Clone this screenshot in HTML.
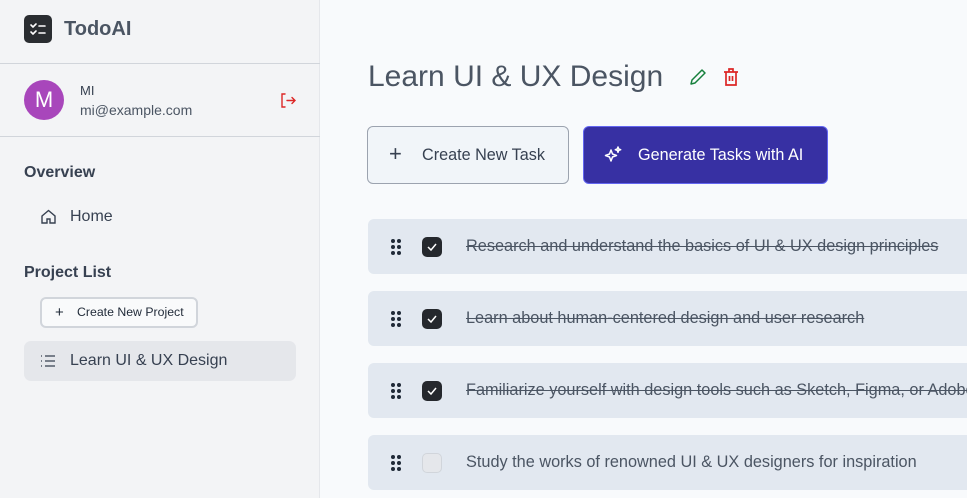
<!DOCTYPE html>
<html><head><style>
*{box-sizing:border-box;margin:0;padding:0}
body{width:967px;height:498px;overflow:hidden;font-family:"Liberation Sans",sans-serif;background:#f8fafc;position:relative;color:#374151}
.sb{position:absolute;left:0;top:0;width:320px;height:498px;background:#f3f4f6;border-right:1px solid #e5e7eb}
.abs{position:absolute}
.hr{position:absolute;left:0;width:320px;height:1px;background:#d1d5db}
.row{position:absolute;left:368px;width:620px;height:55px;background:#e2e8f0;border-radius:6px;overflow:hidden}
.row .t{position:absolute;left:98px;top:18px;font-size:16.3px;color:#4b5563;white-space:nowrap}
.row .t.s{text-decoration:line-through}
.cb{position:absolute;left:54px;top:18px;width:20px;height:20px;border-radius:5px;background:#25282d}
.cb.e{background:#e5e7eb;border:1px solid #d1d5db}
.dots{position:absolute;left:22px;top:19px}
</style></head><body>
<div class="sb">
 <div class="abs" style="left:24px;top:15px;width:28px;height:28px;border-radius:5px;background:#2a2d31"></div>
 <svg class="abs" style="left:24px;top:15px" width="28" height="28" viewBox="0 0 28 28" fill="none" stroke="#fff" stroke-width="1.6" stroke-linecap="round"><path d="M7 10l2 2 3-3M7 17l2 2 3-3M15 11h6M15 18h6"/></svg>
 <div class="abs" style="left:64px;top:18px;font-size:20px;font-weight:bold;color:#4b5563">TodoAI</div>
 <div class="hr" style="top:63px"></div>
 <div class="abs" style="left:24px;top:80px;width:40px;height:40px;border-radius:50%;background:#a846bb;color:#fff;font-size:22px;text-align:center;line-height:40px">M</div>
 <div class="abs" style="left:80px;top:83px;font-size:13px;color:#374151">MI</div>
 <div class="abs" style="left:80px;top:102px;font-size:14px;color:#4b5563">mi@example.com</div>
 <svg class="abs" style="left:279px;top:92px" width="17" height="17" viewBox="0 0 17 17" fill="none" stroke="#dc2626" stroke-width="1.4" stroke-linecap="round"><path d="M6 2H3v13h3M8 8.5h8M13 5.5l3 3-3 3"/></svg>
 <div class="hr" style="top:136px"></div>
 <div class="abs" style="left:24px;top:164px;font-size:16px;font-weight:bold;color:#374151">Overview</div>
 <svg class="abs" style="left:40px;top:208px" width="17" height="17" viewBox="0 0 17 17" fill="none" stroke="#374151" stroke-width="1.4"><path d="M2 8l6.5-5.5L15 8v7H10v-4H7v4H2z"/></svg>
 <div class="abs" style="left:70px;top:208px;font-size:16px;color:#374151">Home</div>
 <div class="abs" style="left:24px;top:264px;font-size:16px;font-weight:bold;color:#374151">Project List</div>
 <div class="abs" style="left:40px;top:297px;width:158px;height:31px;border:2px solid #d1d5db;border-radius:6px;background:#f9fafb;font-size:12.3px;color:#1f2937;line-height:27px;padding-left:35px">Create New Project</div>
 <div class="abs" style="left:55px;top:304px;font-size:15px;color:#1f2937">+</div>
 <div class="abs" style="left:24px;top:341px;width:272px;height:40px;border-radius:7px;background:#e5e7eb"></div>
 <svg class="abs" style="left:40px;top:354px" width="16" height="14" viewBox="0 0 16 14" fill="none" stroke="#374151" stroke-width="1.3"><path d="M5 2h10M5 7h10M5 12h10M1 2h1M1 7h1M1 12h1"/></svg>
 <div class="abs" style="left:70px;top:352px;font-size:16px;color:#374151">Learn UI &amp; UX Design</div>
</div>
<div class="abs" style="left:368px;top:60px;font-size:30px;color:#4b5563">Learn UI &amp; UX Design</div>
<svg class="abs" style="left:688px;top:67px" width="20" height="20" viewBox="0 0 20 20" fill="none" stroke="#16803c" stroke-width="1.5" stroke-linejoin="round"><path d="M3 17l1-4L14 3l3 3L7 16z"/></svg>
<svg class="abs" style="left:721px;top:67px" width="20" height="20" viewBox="0 0 20 20" fill="none" stroke="#dc2626" stroke-width="1.7"><path d="M3 5h14M8 5V2h4v3M5 5v13h10V5M8.5 9v5M11.5 9v5"/></svg>
<div class="abs" style="left:367px;top:126px;width:202px;height:58px;border:1px solid #9ca3af;border-radius:6px;background:#f1f5f9;font-size:16.2px;color:#374151;line-height:57px;padding-left:54px">Create New Task</div>
<div class="abs" style="left:389px;top:141px;font-size:22px;color:#374151;font-weight:300">+</div>
<div class="abs" style="left:583px;top:126px;width:245px;height:58px;border:1px solid #6366f1;border-radius:6px;background:#3730a3;font-size:16.2px;color:#fff;line-height:57px;padding-left:54px">Generate Tasks with AI</div>
<svg class="abs" style="left:603px;top:145px" width="20" height="20" viewBox="0 0 20 20" fill="none" stroke="#fff" stroke-width="1.5" stroke-linejoin="round"><path d="M8 5l1.5 4 4 1.5-4 1.5L8 16l-1.5-4-4-1.5 4-1.5zM15 2l.7 2 2 .7-2 .7-.7 2-.7-2-2-.7 2-.7z"/></svg>
<div class="row" style="top:219px"><svg class="dots" width="12" height="18"><g fill="#1f2937"><circle cx="3" cy="3" r="2"/><circle cx="9" cy="3" r="2"/><circle cx="3" cy="9" r="2"/><circle cx="9" cy="9" r="2"/><circle cx="3" cy="15" r="2"/><circle cx="9" cy="15" r="2"/></g></svg><div class="cb"><svg width="20" height="20"><path d="M6 10l3 3 5-6" fill="none" stroke="#fff" stroke-width="1.5"/></svg></div><div class="t s">Research and understand the basics of UI &amp; UX design principles</div></div>
<div class="row" style="top:291px"><svg class="dots" width="12" height="18"><g fill="#1f2937"><circle cx="3" cy="3" r="2"/><circle cx="9" cy="3" r="2"/><circle cx="3" cy="9" r="2"/><circle cx="9" cy="9" r="2"/><circle cx="3" cy="15" r="2"/><circle cx="9" cy="15" r="2"/></g></svg><div class="cb"><svg width="20" height="20"><path d="M6 10l3 3 5-6" fill="none" stroke="#fff" stroke-width="1.5"/></svg></div><div class="t s">Learn about human-centered design and user research</div></div>
<div class="row" style="top:363px"><svg class="dots" width="12" height="18"><g fill="#1f2937"><circle cx="3" cy="3" r="2"/><circle cx="9" cy="3" r="2"/><circle cx="3" cy="9" r="2"/><circle cx="9" cy="9" r="2"/><circle cx="3" cy="15" r="2"/><circle cx="9" cy="15" r="2"/></g></svg><div class="cb"><svg width="20" height="20"><path d="M6 10l3 3 5-6" fill="none" stroke="#fff" stroke-width="1.5"/></svg></div><div class="t s">Familiarize yourself with design tools such as Sketch, Figma, or Adobe XD</div></div>
<div class="row" style="top:435px"><svg class="dots" width="12" height="18"><g fill="#1f2937"><circle cx="3" cy="3" r="2"/><circle cx="9" cy="3" r="2"/><circle cx="3" cy="9" r="2"/><circle cx="9" cy="9" r="2"/><circle cx="3" cy="15" r="2"/><circle cx="9" cy="15" r="2"/></g></svg><div class="cb e"></div><div class="t">Study the works of renowned UI &amp; UX designers for inspiration</div></div>
</body></html>
